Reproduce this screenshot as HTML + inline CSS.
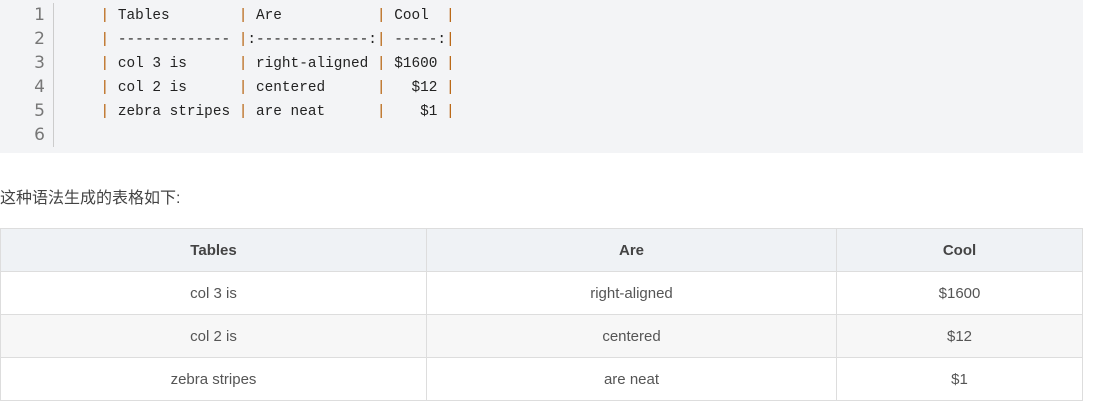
<!DOCTYPE html>
<html><head><meta charset="utf-8"><style>
body{margin:0;width:1093px;height:408px;background:#fff;overflow:hidden;font-family:"Liberation Sans","Noto Sans CJK SC",sans-serif;}
.code{position:absolute;left:0;top:0;width:1083px;height:153px;background:#f3f4f6;}
.gut{position:absolute;left:0;top:3px;width:53px;height:144px;border-right:1px solid #ccc;}
.gut div{height:24px;line-height:24px;text-align:right;padding-right:8px;font-size:17px;color:#777;font-family:"DejaVu Sans",sans-serif;}
.src{position:absolute;left:66px;top:4px;font-family:"Liberation Mono",monospace;font-size:14.4px;color:#222;white-space:pre;}
.src div{height:24px;line-height:24px;}
.p{color:#b35a00;}
.txt{position:absolute;left:0;top:184px;font-size:16px;color:#444;}
table{position:absolute;left:0;top:228px;width:1083px;border-collapse:collapse;font-size:15px;color:#555;}
td,th{border:1px solid #ddd;height:42px;text-align:center;padding:0;}
th{background:#eff2f5;font-weight:bold;color:#444;}
tr.s td{background:#f7f7f7;}
</style></head><body>
<div class="code">
<div class="gut"><div>1</div><div>2</div><div>3</div><div>4</div><div>5</div><div>6</div></div>
<div class="src"><div>    <span class="p">|</span> Tables        <span class="p">|</span> Are           <span class="p">|</span> Cool  <span class="p">|</span></div><div>    <span class="p">|</span> ------------- <span class="p">|</span>:-------------:<span class="p">|</span> -----:<span class="p">|</span></div><div>    <span class="p">|</span> col 3 is      <span class="p">|</span> right-aligned <span class="p">|</span> $1600 <span class="p">|</span></div><div>    <span class="p">|</span> col 2 is      <span class="p">|</span> centered      <span class="p">|</span>   $12 <span class="p">|</span></div><div>    <span class="p">|</span> zebra stripes <span class="p">|</span> are neat      <span class="p">|</span>    $1 <span class="p">|</span></div><div> </div></div>
</div>
<div class="txt">这种语法生成的表格如下:</div>
<table>
<tr><th style="width:425px">Tables</th><th style="width:409px">Are</th><th>Cool</th></tr>
<tr><td>col 3 is</td><td>right-aligned</td><td>$1600</td></tr>
<tr class="s"><td>col 2 is</td><td>centered</td><td>$12</td></tr>
<tr><td>zebra stripes</td><td>are neat</td><td>$1</td></tr>
</table>
</body></html>
